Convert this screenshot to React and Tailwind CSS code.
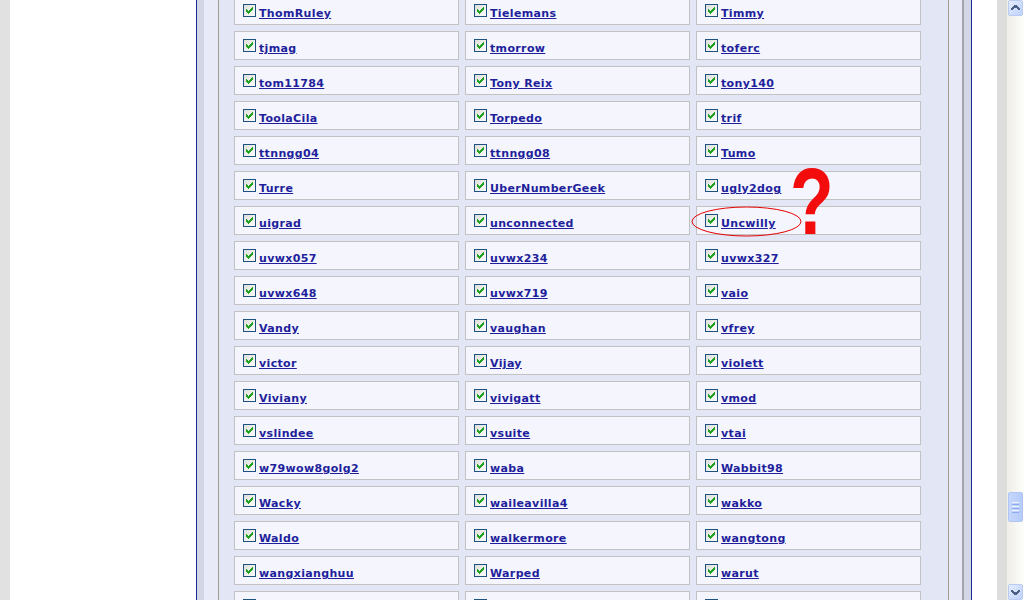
import React from "react";

const rows = [
  ["ThomRuley", "Tielemans", "Timmy"],
  ["tjmag", "tmorrow", "toferc"],
  ["tom11784", "Tony Reix", "tony140"],
  ["ToolaCila", "Torpedo", "trif"],
  ["ttnngg04", "ttnngg08", "Tumo"],
  ["Turre", "UberNumberGeek", "ugly2dog"],
  ["uigrad", "unconnected", "Uncwilly"],
  ["uvwx057", "uvwx234", "uvwx327"],
  ["uvwx648", "uvwx719", "vaio"],
  ["Vandy", "vaughan", "vfrey"],
  ["victor", "Vijay", "violett"],
  ["Viviany", "vivigatt", "vmod"],
  ["vslindee", "vsuite", "vtai"],
  ["w79wow8golg2", "waba", "Wabbit98"],
  ["Wacky", "waileavilla4", "wakko"],
  ["Waldo", "walkermore", "wangtong"],
  ["wangxianghuu", "Warped", "warut"],
  ["", "", ""],
];

const checkPixels = [
  [9, 3, 1, 1],
  [8, 4, 2, 1],
  [3, 5, 1, 1],
  [7, 5, 3, 1],
  [3, 6, 2, 1],
  [6, 6, 3, 1],
  [3, 7, 5, 1],
  [4, 8, 3, 1],
  [5, 9, 1, 1],
];

function CheckBox() {
  return (
    <svg width="13" height="13" viewBox="0 0 13 13" shapeRendering="crispEdges" className="shrink-0 mt-[7px]">
      <defs>
        <linearGradient id="cbg" x1="0" y1="0" x2="1" y2="1">
          <stop offset="0" stopColor="#dcdcd7" />
          <stop offset="1" stopColor="#ffffff" />
        </linearGradient>
      </defs>
      <rect x="0.5" y="0.5" width="12" height="12" fill="url(#cbg)" stroke="#1c5180" />
      {checkPixels.map(([x, y, w, h], i) => (
        <rect key={i} x={x} y={y} width={w} height={h} fill="#21a121" />
      ))}
    </svg>
  );
}

function Card({ name }) {
  return (
    <div className="h-[29px] border border-[#c2c2c2] bg-[#f4f5fd] flex items-start pl-[8px]">
      <CheckBox />
      {name ? (
        <a className="ml-[3px] mt-[10px] text-[11px] leading-[13px] font-bold tracking-[0.35px] text-[#1f1f9c] underline underline-offset-[1px] whitespace-nowrap">
          {name}
        </a>
      ) : null}
    </div>
  );
}

function ArrowButton({ down }) {
  return (
    <div className="w-[15px] h-[16px] ml-[1px] rounded-[2px] border border-[#b9cbf3] bg-linear-to-br from-[#e4ecfe] to-[#bfd2fb] flex items-center justify-center">
      <svg width="9" height="6" viewBox="0 0 9 6" shapeRendering="crispEdges">
        {down ? (
          <path d="M0 1h2v1h1v1h3v-1h1v-1h2v2h-1v1h-1v1h-1v1h-3v-1h-1v-1h-1z" fill="#4d6185" />
        ) : (
          <path d="M3 0h3v1h1v1h1v1h1v2h-2v-1h-1v-1h-3v1h-1v1h-2v-2h1v-1h1z" fill="#4d6185" />
        )}
      </svg>
    </div>
  );
}

export default function App() {
  return (
    <div className="relative w-[1024px] h-[600px] overflow-hidden flex bg-white font-['DejaVu_Sans',sans-serif]">
      <div className="w-[10px] shrink-0 bg-[#e1e1e1]" />
      <div className="w-[987px] shrink-0 bg-white pl-[186px] pr-[25px] flex">
        <div className="flex w-[776px] border-x border-[#1b2a9b] bg-[#d3d6e4] px-[7px]">
          <div className="flex flex-1 bg-[#e8ebf7] pl-[14px] pr-[13px] border-r-2 border-[#a3a3ab]">
            <div className="flex-1 border-x border-[#a39c8c] bg-[#e2e6f5] pl-[15px]">
              <div className="grid grid-cols-[225px_225px_225px] gap-[6px] -mt-[4px]">
                {rows.flat().map((n, i) => (
                  <Card key={i} name={n} />
                ))}
              </div>
            </div>
          </div>
        </div>
      </div>
      <div className="w-[10px] shrink-0 bg-[#dddddd]" />
      <div className="w-[17px] shrink-0 bg-linear-to-r from-[#efeee7] to-[#fdfdfb] flex flex-col">
        <ArrowButton />
        <div className="flex-1 relative">
          <div className="absolute left-[1px] top-[476px] w-[15px] h-[30px] rounded-[2px] border border-[#b1c6f4] bg-linear-to-r from-[#c6d6fc] to-[#b6cbfa] flex flex-col items-center justify-center gap-[1px]">
            <div className="w-[7px] h-[1px] bg-[#eef4fe]" />
            <div className="w-[7px] h-[1px] bg-[#8cabf0]" />
            <div className="w-[7px] h-[1px] bg-[#eef4fe]" />
            <div className="w-[7px] h-[1px] bg-[#8cabf0]" />
            <div className="w-[7px] h-[1px] bg-[#eef4fe]" />
            <div className="w-[7px] h-[1px] bg-[#8cabf0]" />
          </div>
        </div>
        <ArrowButton down />
      </div>

      <svg className="absolute left-[690px] top-[205px]" width="114" height="34" viewBox="0 0 114 34">
        <ellipse cx="56.5" cy="16.5" rx="54.5" ry="14.5" fill="none" stroke="#e60000" strokeWidth="1" />
      </svg>
      <span className="absolute left-[790px] top-[155px] origin-left scale-x-[0.76] text-[94px] leading-[94px] font-bold text-[#f20c0c] font-['Liberation_Sans',sans-serif]">
        ?
      </span>
    </div>
  );
}
